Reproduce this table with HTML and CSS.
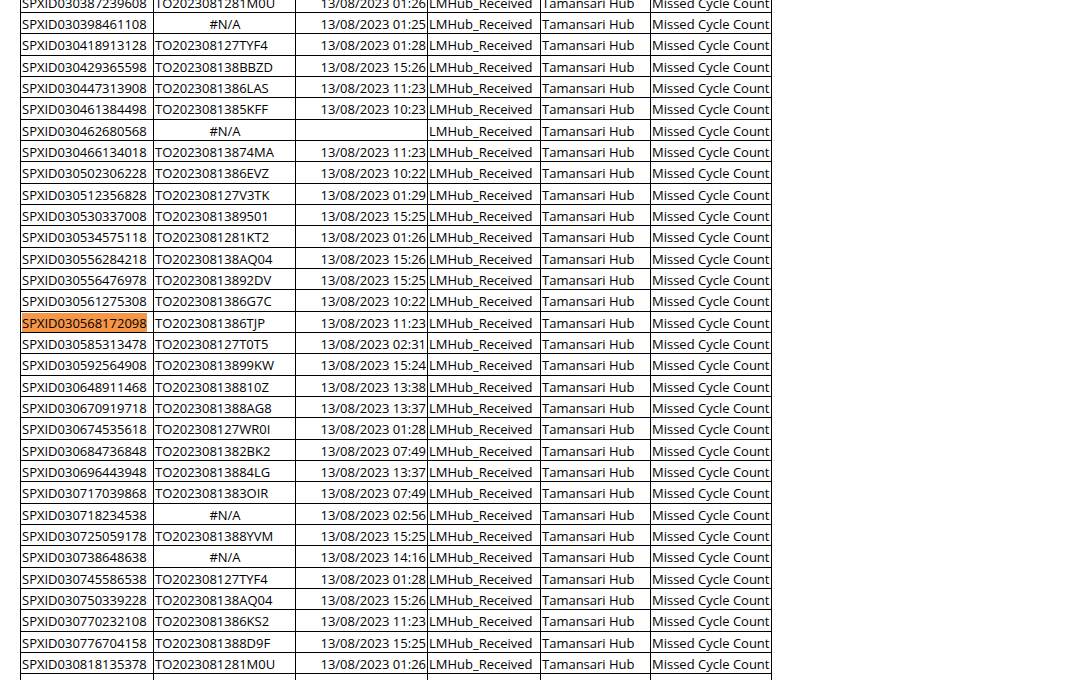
FILE: index.html
```html
<!DOCTYPE html>
<html>
<head>
<meta charset="utf-8">
<link rel="stylesheet" href="styles.css">
</head>
<body>
<div class="sheet">
<table class="grid">
<colgroup><col class="c1"><col class="c2"><col class="c3"><col class="c4"><col class="c5"><col class="c6"></colgroup>
<tbody>
<tr><td>SPXID030387239608</td><td>TO2023081281M0U</td><td class="dt">13/08/2023 01:26</td><td>LMHub_Received</td><td>Tamansari Hub</td><td>Missed Cycle Count</td></tr>
<tr><td>SPXID030398461108</td><td class="na">#N/A</td><td class="dt">13/08/2023 01:25</td><td>LMHub_Received</td><td>Tamansari Hub</td><td>Missed Cycle Count</td></tr>
<tr><td>SPXID030418913128</td><td>TO202308127TYF4</td><td class="dt">13/08/2023 01:28</td><td>LMHub_Received</td><td>Tamansari Hub</td><td>Missed Cycle Count</td></tr>
<tr><td>SPXID030429365598</td><td>TO202308138BBZD</td><td class="dt">13/08/2023 15:26</td><td>LMHub_Received</td><td>Tamansari Hub</td><td>Missed Cycle Count</td></tr>
<tr><td>SPXID030447313908</td><td>TO2023081386LAS</td><td class="dt">13/08/2023 11:23</td><td>LMHub_Received</td><td>Tamansari Hub</td><td>Missed Cycle Count</td></tr>
<tr><td>SPXID030461384498</td><td>TO2023081385KFF</td><td class="dt">13/08/2023 10:23</td><td>LMHub_Received</td><td>Tamansari Hub</td><td>Missed Cycle Count</td></tr>
<tr><td>SPXID030462680568</td><td class="na">#N/A</td><td class="dt"></td><td>LMHub_Received</td><td>Tamansari Hub</td><td>Missed Cycle Count</td></tr>
<tr><td>SPXID030466134018</td><td>TO20230813874MA</td><td class="dt">13/08/2023 11:23</td><td>LMHub_Received</td><td>Tamansari Hub</td><td>Missed Cycle Count</td></tr>
<tr><td>SPXID030502306228</td><td>TO2023081386EVZ</td><td class="dt">13/08/2023 10:22</td><td>LMHub_Received</td><td>Tamansari Hub</td><td>Missed Cycle Count</td></tr>
<tr><td>SPXID030512356828</td><td>TO202308127V3TK</td><td class="dt">13/08/2023 01:29</td><td>LMHub_Received</td><td>Tamansari Hub</td><td>Missed Cycle Count</td></tr>
<tr><td>SPXID030530337008</td><td>TO2023081389501</td><td class="dt">13/08/2023 15:25</td><td>LMHub_Received</td><td>Tamansari Hub</td><td>Missed Cycle Count</td></tr>
<tr><td>SPXID030534575118</td><td>TO2023081281KT2</td><td class="dt">13/08/2023 01:26</td><td>LMHub_Received</td><td>Tamansari Hub</td><td>Missed Cycle Count</td></tr>
<tr><td>SPXID030556284218</td><td>TO202308138AQ04</td><td class="dt">13/08/2023 15:26</td><td>LMHub_Received</td><td>Tamansari Hub</td><td>Missed Cycle Count</td></tr>
<tr><td>SPXID030556476978</td><td>TO20230813892DV</td><td class="dt">13/08/2023 15:25</td><td>LMHub_Received</td><td>Tamansari Hub</td><td>Missed Cycle Count</td></tr>
<tr><td>SPXID030561275308</td><td>TO2023081386G7C</td><td class="dt">13/08/2023 10:22</td><td>LMHub_Received</td><td>Tamansari Hub</td><td>Missed Cycle Count</td></tr>
<tr><td><span class="hl">SPXID030568172098</span></td><td>TO2023081386TJP</td><td class="dt">13/08/2023 11:23</td><td>LMHub_Received</td><td>Tamansari Hub</td><td>Missed Cycle Count</td></tr>
<tr><td>SPXID030585313478</td><td>TO202308127T0T5</td><td class="dt">13/08/2023 02:31</td><td>LMHub_Received</td><td>Tamansari Hub</td><td>Missed Cycle Count</td></tr>
<tr><td>SPXID030592564908</td><td>TO20230813899KW</td><td class="dt">13/08/2023 15:24</td><td>LMHub_Received</td><td>Tamansari Hub</td><td>Missed Cycle Count</td></tr>
<tr><td>SPXID030648911468</td><td>TO202308138810Z</td><td class="dt">13/08/2023 13:38</td><td>LMHub_Received</td><td>Tamansari Hub</td><td>Missed Cycle Count</td></tr>
<tr><td>SPXID030670919718</td><td>TO2023081388AG8</td><td class="dt">13/08/2023 13:37</td><td>LMHub_Received</td><td>Tamansari Hub</td><td>Missed Cycle Count</td></tr>
<tr><td>SPXID030674535618</td><td>TO202308127WR0I</td><td class="dt">13/08/2023 01:28</td><td>LMHub_Received</td><td>Tamansari Hub</td><td>Missed Cycle Count</td></tr>
<tr><td>SPXID030684736848</td><td>TO2023081382BK2</td><td class="dt">13/08/2023 07:49</td><td>LMHub_Received</td><td>Tamansari Hub</td><td>Missed Cycle Count</td></tr>
<tr><td>SPXID030696443948</td><td>TO20230813884LG</td><td class="dt">13/08/2023 13:37</td><td>LMHub_Received</td><td>Tamansari Hub</td><td>Missed Cycle Count</td></tr>
<tr><td>SPXID030717039868</td><td>TO2023081383OIR</td><td class="dt">13/08/2023 07:49</td><td>LMHub_Received</td><td>Tamansari Hub</td><td>Missed Cycle Count</td></tr>
<tr><td>SPXID030718234538</td><td class="na">#N/A</td><td class="dt">13/08/2023 02:56</td><td>LMHub_Received</td><td>Tamansari Hub</td><td>Missed Cycle Count</td></tr>
<tr><td>SPXID030725059178</td><td>TO2023081388YVM</td><td class="dt">13/08/2023 15:25</td><td>LMHub_Received</td><td>Tamansari Hub</td><td>Missed Cycle Count</td></tr>
<tr><td>SPXID030738648638</td><td class="na">#N/A</td><td class="dt">13/08/2023 14:16</td><td>LMHub_Received</td><td>Tamansari Hub</td><td>Missed Cycle Count</td></tr>
<tr><td>SPXID030745586538</td><td>TO202308127TYF4</td><td class="dt">13/08/2023 01:28</td><td>LMHub_Received</td><td>Tamansari Hub</td><td>Missed Cycle Count</td></tr>
<tr><td>SPXID030750339228</td><td>TO202308138AQ04</td><td class="dt">13/08/2023 15:26</td><td>LMHub_Received</td><td>Tamansari Hub</td><td>Missed Cycle Count</td></tr>
<tr><td>SPXID030770232108</td><td>TO2023081386KS2</td><td class="dt">13/08/2023 11:23</td><td>LMHub_Received</td><td>Tamansari Hub</td><td>Missed Cycle Count</td></tr>
<tr><td>SPXID030776704158</td><td>TO2023081388D9F</td><td class="dt">13/08/2023 15:25</td><td>LMHub_Received</td><td>Tamansari Hub</td><td>Missed Cycle Count</td></tr>
<tr><td>SPXID030818135378</td><td>TO2023081281M0U</td><td class="dt">13/08/2023 01:26</td><td>LMHub_Received</td><td>Tamansari Hub</td><td>Missed Cycle Count</td></tr>
<tr><td></td><td></td><td class="dt">13/08/2023 11:23</td><td></td><td></td><td></td></tr>
</tbody>
</table>
</div>
</body>
</html>
```
FILE: styles.css
```css
html, body {
  margin: 0;
  padding: 0;
  background: #ffffff;
}
.sheet {
  height: 680px;
  overflow: hidden;
  padding-left: 20px;
}
.grid {
  margin-top: -9.33px;
  border-collapse: collapse;
  table-layout: fixed;
  width: 752px;
  font-family: "Open Sans", "Liberation Sans", sans-serif;
  font-size: 13px;
  color: #000;
}
.c1 { width: 133px; }
.c2 { width: 142px; }
.c3 { width: 132px; }
.c4 { width: 113px; }
.c5 { width: 110px; }
.c6 { width: 121px; }
.grid td {
  border: 1px solid #000;
  height: 21.33px;
  padding: 2px 0 0 1px;
  line-height: 16px;
  white-space: nowrap;
  overflow: hidden;
  box-sizing: border-box;
  vertical-align: middle;
}
.grid td.dt {
  text-align: right;
  padding: 2px 1px 0 0;
}
.grid td.na {
  text-align: center;
}
.hl {
  background: #f79646;
  padding: 1px 0 0;
}
```
